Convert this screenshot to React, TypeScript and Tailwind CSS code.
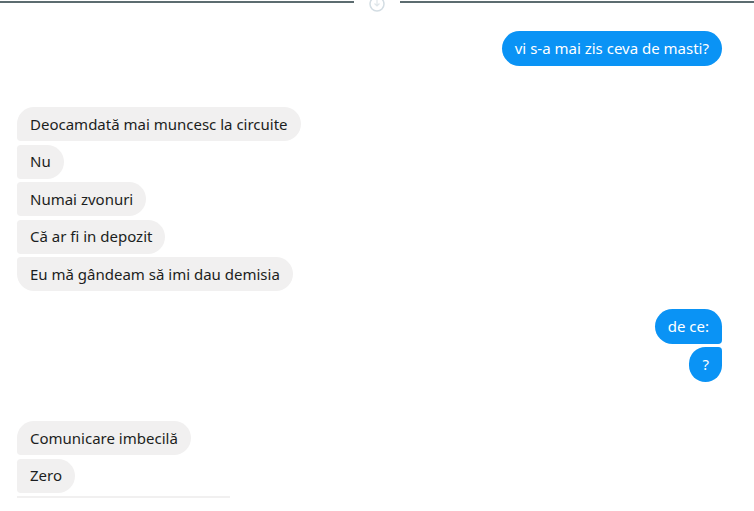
type Corner = "single" | "first" | "middle" | "last";

const recvRadius: Record<Corner, string> = {
  single: "rounded-[18px]",
  first: "rounded-[18px] rounded-bl-[4px]",
  middle: "rounded-r-[18px] rounded-l-[4px]",
  last: "rounded-[18px] rounded-tl-[4px]",
};

const sentRadius: Record<Corner, string> = {
  single: "rounded-[18px]",
  first: "rounded-[18px] rounded-br-[4px]",
  middle: "rounded-l-[18px] rounded-r-[4px]",
  last: "rounded-[18px] rounded-tr-[4px]",
};

function Received({ text, corner }: { text: string; corner: Corner }) {
  return (
    <div className="flex">
      <div
        className={`h-[34px] flex items-center px-[13px] bg-[#f1f0f0] text-[#1c1e21] ${recvRadius[corner]}`}
      >
        {text}
      </div>
    </div>
  );
}

function Sent({ text, corner }: { text: string; corner: Corner }) {
  return (
    <div className="flex justify-end">
      <div
        className={`h-[35px] flex items-center px-[13px] bg-[#0a93f5] text-white ${sentRadius[corner]}`}
      >
        {text}
      </div>
    </div>
  );
}

export default function App() {
  return (
    <div
      className="w-[754px] h-[511px] overflow-hidden bg-white text-[15px] relative"
      style={{ fontFamily: '"Noto Sans", "Open Sans", sans-serif' }}
    >
      {/* top divider with faint circle */}
      <div className="flex items-center h-[4px]">
        <div className="flex-1 h-[1.5px] bg-[#5c6c70]" />
        <div className="w-[46px]" />
        <div className="flex-1 h-[1.5px] bg-[#5c6c70]" />
      </div>
      <svg className="absolute left-[369px] top-[-4px]" width="16" height="16" viewBox="0 0 16 16">
        <circle cx="8" cy="8" r="7" fill="none" stroke="#d3dde3" strokeWidth="1.5" />
        <path d="M8 4v6M5.5 7.5L8 10l2.5-2.5" fill="none" stroke="#dfe6ea" strokeWidth="1.2" />
      </svg>

      <div className="flex flex-col pl-[17px] pr-[32px] pt-[27px]">
        <Sent text="vi s-a mai zis ceva de masti?" corner="single" />

        <div className="flex flex-col gap-[3.5px] mt-[41px]">
          <Received text="Deocamdată mai muncesc la circuite" corner="first" />
          <Received text="Nu" corner="middle" />
          <Received text="Numai zvonuri" corner="middle" />
          <Received text="Că ar fi in depozit" corner="middle" />
          <Received text="Eu mă gândeam să imi dau demisia" corner="last" />
        </div>

        <div className="flex flex-col gap-[3px] mt-[18px]">
          <Sent text="de ce:" corner="first" />
          <Sent text="?" corner="last" />
        </div>

        <div className="flex flex-col gap-[3.5px] mt-[39px]">
          <Received text="Comunicare imbecilă" corner="first" />
          <Received text="Zero" corner="middle" />
          <div className="w-[213px] h-[2px] bg-[#f1f0f0]" />
        </div>
      </div>
    </div>
  );
}
